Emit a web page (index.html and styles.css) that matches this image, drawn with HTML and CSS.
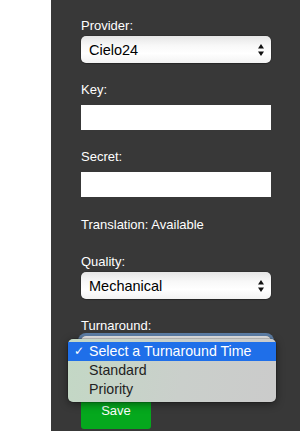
FILE: index.html
```html
<!DOCTYPE html>
<html lang="en">
<head>
  <meta charset="UTF-8" />
  <title>Translation Settings</title>
  <link rel="stylesheet" href="styles.css">
</head>
<body>

  <div class="gutter"></div>

  <form class="panel">
    <div class="field">
      <label for="provider">Provider:</label>
      <div class="select-wrap">
        <select id="provider">
          <option>Cielo24</option>
        </select>
        <svg class="arrows" width="6" height="12" viewBox="0 0 6 12"><path d="M3 0 L6 4.5 H0 Z M0 7.5 H6 L3 12 Z" fill="#111"/></svg>
      </div>
    </div>

    <div class="field">
      <label for="key">Key:</label>
      <input type="text" id="key" class="text-input" />
    </div>

    <div class="field wide">
      <label for="secret">Secret:</label>
      <input type="text" id="secret" class="text-input" />
    </div>

    <div class="field wider">
      <p class="status">Translation: Available</p>
    </div>

    <div class="field">
      <label for="quality">Quality:</label>
      <div class="select-wrap">
        <select id="quality">
          <option>Mechanical</option>
        </select>
        <svg class="arrows" width="6" height="12" viewBox="0 0 6 12"><path d="M3 0 L6 4.5 H0 Z M0 7.5 H6 L3 12 Z" fill="#111"/></svg>
      </div>
    </div>

    <div class="field">
      <label for="turnaround">Turnaround:</label>
      <div class="select-wrap open">
        <select id="turnaround" class="focused">
          <option>Select a Turnaround Time</option>
          <option>Standard</option>
          <option>Priority</option>
        </select>
        <ul class="menu">
          <li class="active"><span class="check">✓</span>Select a Turnaround Time</li>
          <li>Standard</li>
          <li>Priority</li>
        </ul>
      </div>
    </div>

    <button type="button" class="save">Save</button>
  </form>

</body>
</html>
```

FILE: styles.css
```css
* {
  margin: 0;
  padding: 0;
  box-sizing: border-box;
  font-family: "Liberation Sans", Arial, sans-serif;
}

body {
  display: flex;
  min-height: 100vh;
  background: #fff;
}

.gutter {
  width: 51px;
  background: #fff;
}

.panel {
  flex: 1;
  background: #383838;
  padding: 18px 29px 0 30px;
  display: flex;
  flex-direction: column;
}

.field {
  margin-bottom: 19px;
}

.field.wide {
  margin-bottom: 20px;
}

.field.wider {
  margin-bottom: 22px;
}

label, .status {
  display: block;
  color: #fff;
  font-size: 13px;
  line-height: 15px;
}

label {
  margin-bottom: 3px;
}

.select-wrap {
  position: relative;
  width: 190px;
}

select {
  appearance: none;
  -webkit-appearance: none;
  display: block;
  width: 100%;
  height: 27px;
  padding: 0 20px 0 8px;
  border: none;
  border-radius: 5px;
  font-size: 14.5px;
  color: #000;
  background: linear-gradient(#e6e6e6, #f8f8f8 35%, #fff 65%, #f2f2f2);
  box-shadow: 0 0 0 0.5px rgba(0, 0, 0, 0.25), 0 1px 1px rgba(0, 0, 0, 0.2);
  outline: none;
}

select.focused {
  box-shadow: 0 0 0 3px #5d7ea6;
  color: transparent;
}

.arrows {
  position: absolute;
  right: 7px;
  top: 8px;
  pointer-events: none;
}

.text-input {
  display: block;
  width: 190px;
  height: 25px;
  margin-top: 8px;
  border: none;
  background: #fff;
  font-size: 13px;
  padding: 0 4px;
}

.menu {
  position: absolute;
  left: -13px;
  top: 3px;
  width: 208px;
  list-style: none;
  padding: 3px 0;
  border-radius: 5px;
  background: linear-gradient(100deg, #c3d8c5, #cacfcb 55%, #cbcbcb);
  box-shadow: 0 2px 8px rgba(0, 0, 0, 0.45), 0 0 0 0.5px rgba(0, 0, 0, 0.3);
  z-index: 2;
}

.menu li {
  position: relative;
  height: 19px;
  line-height: 19px;
  padding-left: 21px;
  font-size: 14.2px;
  color: #222;
}

.menu li.active {
  background: #1f6fe9;
  color: #fff;
}

.check {
  position: absolute;
  left: 6px;
  top: 0;
  font-size: 12px;
  font-family: "DejaVu Sans", sans-serif;
}

.save {
  align-self: flex-start;
  width: 70px;
  height: 38px;
  margin-top: 9px;
  border: none;
  border-radius: 3px;
  background: #05a81d;
  color: #fff;
  font-size: 13px;
}
```
